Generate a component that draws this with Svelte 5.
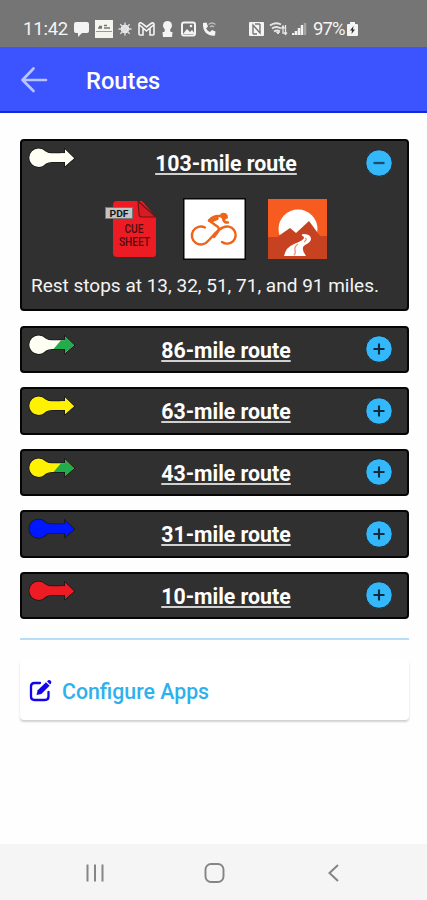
<script>
  let routes = [
    { miles: 103, start: "#fffff4", end: "#fffff4", stops: "13, 32, 51, 71, and 91" },
    { miles: 86, start: "#fffff4", end: "#22ac4b" },
    { miles: 63, start: "#fff200", end: "#fff200" },
    { miles: 43, start: "#fff200", end: "#22ac4b" },
    { miles: 31, start: "#0018ff", end: "#0018ff" },
    { miles: 10, start: "#ed1c24", end: "#ed1c24" }
  ];

  let openRoute = 103;

  const toggle = miles => {
    openRoute = openRoute === miles ? null : miles;
  };
</script>

<style>
  :global(body) {
    background-color: #fefefe;
  }

  .screen {
    display: flex;
    flex-direction: column;
    min-height: 900px;
    font-family: Roboto, "Liberation Sans", sans-serif;
  }

  svg {
    display: block;
    flex: none;
  }

  .status {
    box-sizing: border-box;
    display: flex;
    align-items: center;
    height: 47px;
    padding: 11px 0 0 23px;
    background-color: #757575;
    color: #f4f4f4;
    font-size: 18.5px;
  }

  .clock {
    width: 51px;
    letter-spacing: -0.2px;
  }

  .notices {
    display: flex;
    align-items: center;
    width: 175px;
    gap: 5.5px;
  }

  .system {
    display: flex;
    align-items: center;
    gap: 4px;
  }

  .percent {
    margin-left: 2px;
    letter-spacing: -0.9px;
  }

  header {
    box-sizing: border-box;
    display: flex;
    align-items: center;
    height: 66px;
    padding: 1px 0 0 20px;
    border-bottom: 2px solid #1029dd;
    background-color: #3b54ff;
  }

  h1 {
    margin: 2px 0 0 37px;
    color: #fff;
    font-size: 23.7px;
    font-weight: 500;
  }

  main {
    flex: 1;
    padding: 26px 18px 0 20px;
  }

  .route {
    box-sizing: border-box;
    min-height: 47.4px;
    margin-bottom: 14.2px;
    border: 2px solid #050505;
    border-radius: 4px;
    background-color: #303030;
  }

  .route.open {
    height: 172.4px;
  }

  .route-head {
    display: grid;
    grid-template-columns: 54px 1fr 30px;
    align-items: start;
    height: 43px;
    padding: 0 12px 0 6px;
  }

  .arrow {
    margin-top: 6px;
  }

  .route-name {
    justify-self: center;
    padding-top: 8px;
    padding-left: 5px;
    color: #fff;
    font-size: 21.3px;
    font-weight: 700;
    line-height: 29px;
    text-decoration: underline;
    text-decoration-color: #d0d0d0;
    text-decoration-thickness: 2px;
    text-underline-offset: 1.5px;
    white-space: nowrap;
  }

  .toggle {
    width: 28px;
    height: 28px;
    margin-top: 7.5px;
    padding: 0;
    border: 0;
    background: none;
    cursor: pointer;
  }

  .links {
    display: flex;
    justify-content: center;
    gap: 21px;
    height: 62px;
    margin-top: 14px;
    padding-left: 3px;
  }

  .stops {
    margin: 13px 0 0 9px;
    color: #f4f4f4;
    font-size: 19px;
    line-height: 26px;
    white-space: nowrap;
  }

  hr {
    height: 2px;
    margin: 18.5px 0 19px;
    border: 0;
    background-color: #b7def8;
  }

  .configure {
    box-sizing: border-box;
    display: flex;
    align-items: center;
    height: 61px;
    padding: 4px 0 0 9px;
    border-radius: 4px;
    background-color: #fff;
    box-shadow: 0 2px 2px rgba(0, 0, 0, 0.18);
    color: #2eb1ec;
    font-size: 21.3px;
    font-weight: 500;
    text-decoration: none;
  }

  .configure span {
    margin-left: 9px;
  }

  nav {
    box-sizing: border-box;
    display: flex;
    justify-content: space-between;
    align-items: center;
    height: 56px;
    padding: 2px 86px 0 85px;
    background-color: #f5f5f5;
  }
</style>

<div class="screen">
  <div class="status">
    <span class="clock">11:42</span>
    <div class="notices">
      <svg width="15" height="16" viewBox="0 0 15 16" fill="#f4f4f4">
        <path d="M2 1h11q2 0 2 2v7q0 2-2 2H8l-4 4v-4H2q-2 0-2-2V3q0-2 2-2z" />
      </svg>
      <svg width="18" height="18" viewBox="0 0 18 18">
        <path d="M0 0h18v18H0z" fill="#f5f5ef" />
        <path d="M4 6.500h3M9 5.500h3M3 8h4M9 8h6" stroke="#77776f" stroke-width="1.300" />
        <path d="M1 11.500h16" stroke="#99998f" />
      </svg>
      <svg width="14" height="16" viewBox="0 0 15 16">
        <circle cx="7.500" cy="8" r="4.500" fill="#f4f4f4" />
        <path d="M7.500 1v14M.5 8h14M2.500 3l10 10M12.500 3l-10 10" stroke="#dedede" stroke-width="1.500" />
      </svg>
      <svg width="17" height="14" viewBox="0 0 17 14" fill="none" stroke="#f4f4f4" stroke-width="1.600">
        <path d="M1 2v10q0 1 1 1h3V6l3.500 3L12 6v7h3q1 0 1-1V2q-1-2-3-.5L8.500 5 4 1.500Q2-.2 1 2zM5 6L1.500 3M12 6l3.500-3" />
      </svg>
      <svg width="15" height="16" viewBox="0 0 15 16" fill="#f4f4f4">
        <circle cx="7.500" cy="4.500" r="4.500" />
        <path d="M5 7h5l.5 4h2l-.5 5H3l-.5-5h2z" />
      </svg>
      <svg width="15" height="16" viewBox="4 0 15 16">
        <rect x="5" y="1.500" width="13" height="13" rx="2" fill="none" stroke="#f4f4f4" stroke-width="2" />
        <path d="M6 13l4-5 3 3 2-2 3 4z" fill="#f4f4f4" />
        <circle cx="14" cy="5" r="1.300" fill="#f4f4f4" />
      </svg>
      <svg width="17" height="16" viewBox="0 0 17 16">
        <path d="M2 2l3.500-.5L7 5.500 5 7.500Q6.500 10 9 11l2-2 3.500 1.500-.5 4Q9 15.500 5 12 1.500 8 2 2z" fill="#f4f4f4" />
        <path d="M7.500 3.500q3.500-3 7 0M9 6q2-2 4 0" fill="none" stroke="#bbb" stroke-width="1.300" />
      </svg>
    </div>
    <div class="system">
      <svg width="16" height="16" viewBox="0 0 16 16">
        <rect x="0" y="1" width="15" height="14" rx="1" fill="#f4f4f4" />
        <path d="M4 13V4l7 8V3M6 3h5M4 13h4" fill="none" stroke="#757575" stroke-width="1.400" />
      </svg>
      <svg width="19" height="16" viewBox="0 0 19 16" fill="none" stroke="#e6e6e6">
        <path d="M1 4.500q5-4 11-1M3 7.500q4-3 9 0M5 10.500q3-2 6 0" stroke-width="1.900" />
        <path d="M7.500 11l3 0-1.500 2z" fill="#e6e6e6" />
        <path d="M14 5v8M12.500 7.500L14 5l1.500 2.500M16.500 4v9M15 11.500l1.500 2 1.500-2" stroke-width="1.300" />
      </svg>
      <svg width="15" height="16" viewBox="0 0 15 16">
        <path d="M1 14v-2M4 14v-4M7 14V7M10 14V4" stroke="#f4f4f4" stroke-width="2.500" />
        <path d="M13 14V2" stroke="#a5a5a5" stroke-width="2.500" />
      </svg>
      <span class="percent">97%</span>
      <svg width="11" height="16" viewBox="0 0 11 16" style:margin-left="-2px">
        <path d="M3 1h5v2h2q1 0 1 1v10q0 1-1 1H1q-1 0-1-1V4q0-1 1-1h2z" fill="#f4f4f4" />
        <path d="M6.500 5L3 9.500h2l-.5 3.500L8 8.500H6z" fill="#333" />
      </svg>
    </div>
  </div>

  <header>
    <svg width="29" height="28" viewBox="0 0 29 28" fill="none" stroke="#b9c3ff" stroke-width="2.700" stroke-linecap="round" stroke-linejoin="round">
      <path d="M13.500 2.500L2.500 14l11 11M2.500 14H26" />
    </svg>
    <h1>Routes</h1>
  </header>

  <main>
    {#each routes as route}
      <section class="route" class:open={openRoute === route.miles}>
        <div class="route-head">
          <svg class="arrow" width="48" height="22" viewBox="0 0 48 22">
            <g stroke="#151515" stroke-width="1.500" paint-order="stroke">
              <path d="M10.500 1.500q4 0 7.500 3.300 2.500 1.500 6 1.500h13V2.500L46 11.200 37 19v-4H24q-3.500 0-6 1.500-3.500 3.500-7.500 3.500a9.200 9.200 0 0 1 0-18.500z" fill={route.start} />
            </g>
            <path d="M33 6.300h4V2.500L46 11.200 37 19v-4H25.500z" fill={route.end} />
          </svg>
          <a class="route-name" href="#{route.miles}">{route.miles}-mile route</a>
          <button class="toggle" aria-label="Toggle details" on:click={() => toggle(route.miles)}>
            <svg width="28" height="28" viewBox="0 0 28 28">
              <circle cx="14" cy="14" r="13.300" fill="#33b8fc" stroke="#202528" stroke-width="1" />
              {#if openRoute === route.miles}
                <path d="M8.500 14h11" stroke="#17506d" stroke-width="2.300" />
              {:else}
                <path d="M8.500 14h11M14 8.500v11" stroke="#102c3b" stroke-width="2.100" />
              {/if}
            </svg>
          </button>
        </div>

        {#if openRoute === route.miles}
          <div class="links">
            <svg width="58" height="62" viewBox="0 0 58 62">
              <path d="M13 3h25l14 16v37q0 3-3 3H13q-4 0-4-4V7q0-4 4-4z" fill="#ed1c24" />
              <path d="M34 3l1 13q0 3 3 3h14z" fill="#d91a20" stroke="#651719" stroke-width="1.200" />
              <rect x="1.500" y="9.500" width="27" height="11" fill="#c4c4c4" stroke="#777" />
              <text x="15" y="18.500" text-anchor="middle" textLength="19" lengthAdjust="spacingAndGlyphs" font-size="9" font-weight="700" fill="#151515">PDF</text>
              <text x="30" y="35" text-anchor="middle" textLength="19" lengthAdjust="spacingAndGlyphs" font-size="12" font-weight="500" fill="#4d0d10">CUE</text>
              <text x="30.500" y="48" text-anchor="middle" textLength="31" lengthAdjust="spacingAndGlyphs" font-size="12" font-weight="500" fill="#4d0d10">SHEET</text>
            </svg>
            <svg width="63" height="62" viewBox="0 0 63 62">
              <path d="M0 0h63v62H0z" fill="#070707" />
              <path d="M1.500 1.500h60v59h-60z" fill="#fff" />
              <g fill="none" stroke="#ee6418" stroke-width="2.400" stroke-linecap="round" stroke-linejoin="round">
                <path d="M22 29.500A9 9 0 1 0 25 43C30 38 35 31 40 29.500a8.600 8.600 0 1 1-1 14.500" />
                <path d="M26 22.500l9 6.500q2 2-1 6l-3 4" />
                <path d="M26 22.500q4-5 11-4.500 3 0 3.500 4 1 3 4.500 2.500" />
                <path d="M28 23l6-2.500" stroke-width="3.500" />
              </g>
              <path d="M37 16q5-3 7.500 1l.5 3-3.500 2z" fill="#ee6418" />
            </svg>
            <svg width="61" height="62" viewBox="0 0 61 62">
              <path d="M1 1h59v60H1z" fill="#f75b20" />
              <circle cx="31" cy="31" r="19.500" fill="#fff" />
              <path d="M1 39h9l13-9 6 5 13-12 11 15h7v23H1z" fill="#c64220" />
              <path d="M36 36q8 0 8 5 0 3-6 6-5 3 1 11h-22q2-9 10-12 11-4 10-7-4-2-1-3z" fill="#fff" />
              <path d="M31 46q-4 3-3 6t-1 5M38 40q3 1-1 4" fill="none" stroke="#e58d70" stroke-width="1.200" />
            </svg>
          </div>
          <p class="stops">Rest stops at {route.stops} miles.</p>
        {/if}
      </section>
    {/each}

    <hr />

    <a class="configure" href="#configure">
      <svg width="24" height="24" viewBox="0 0 24 24">
        <path d="M11 4H5.500Q2 4 2 7.500v10Q2 21 5.500 21H16q3.500 0 3.500-3.500V13" fill="none" stroke="#1504e8" stroke-width="2.300" stroke-linecap="round" />
        <path d="M7.500 16l1.200-4.800 8.300-8 3.600 3.600-8.300 8.200z" fill="#1504e8" />
        <path d="M18 2.300l1.200-1q1.300-.8 2.500.4t.3 2.500L21 5.500z" fill="#1504e8" />
      </svg>
      <span>Configure Apps</span>
    </a>
  </main>

  <nav>
    <svg width="20" height="20" viewBox="0 0 20 20">
      <path d="M2.500 1.500v17M10 1.500v17M17.500 1.500v17" stroke="#858585" stroke-width="2" />
    </svg>
    <svg width="22" height="22" viewBox="0 0 22 22">
      <rect x="1.500" y="2" width="18" height="18" rx="5.500" fill="none" stroke="#858585" stroke-width="1.900" />
    </svg>
    <svg width="16" height="20" viewBox="0 0 16 20">
      <path d="M13 2L4.500 10l8.500 8" fill="none" stroke="#858585" stroke-width="2" />
    </svg>
  </nav>
</div>
